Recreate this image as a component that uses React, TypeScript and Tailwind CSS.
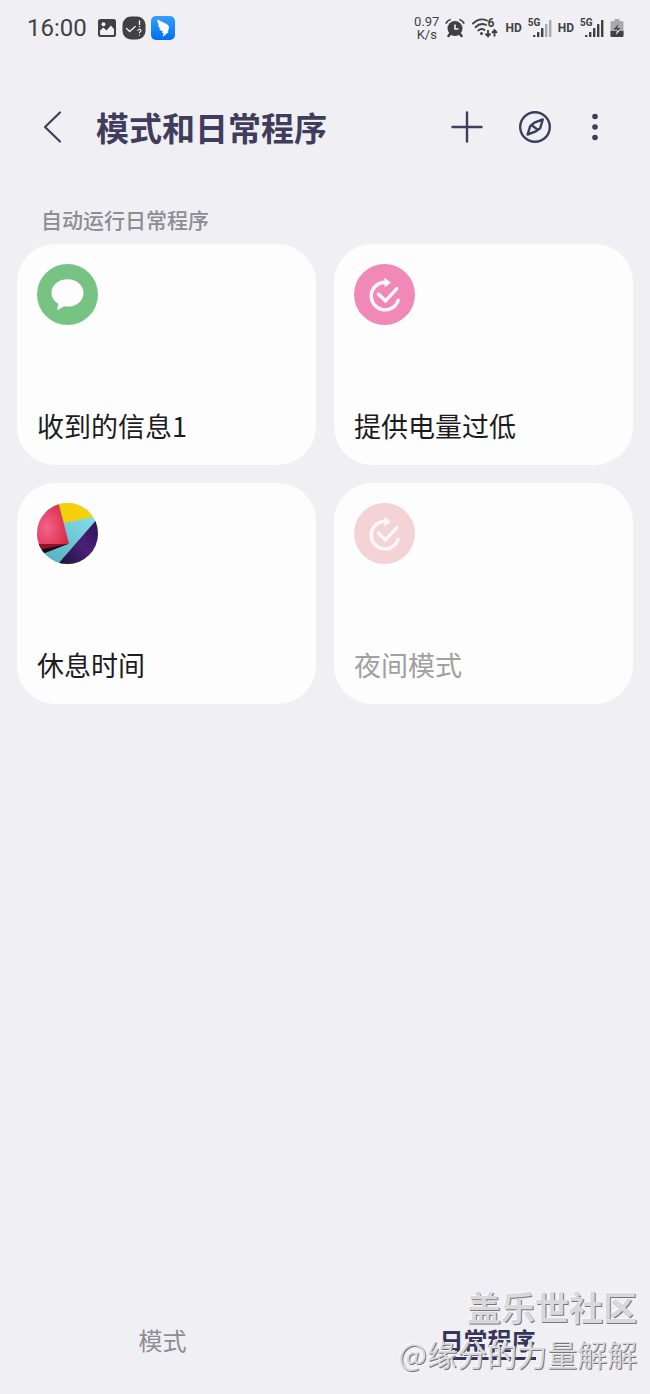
import { useState, type ReactNode } from 'react'
import clsx from 'clsx'

interface Routine {
  name: string
  icon: ReactNode
  disabled?: boolean
}

function GalleryIcon() {
  return (
    <svg viewBox="0 0 20 20" className="size-5">
      <rect x="1" y="1" width="18" height="18" rx="2.5" fill="#414143" />
      <circle cx="6.5" cy="6.3" r="2" fill="#efeff4" />
      <path d="M3 16v-3.500l3.500-3 3 3 4.300-5L17 11v5a1 1 0 0 1-1 1H4a1 1 0 0 1-1-1z" fill="#efeff4" />
    </svg>
  )
}

function ReminderIcon() {
  return (
    <svg viewBox="0 0 24 24" className="size-6">
      <rect x="0.5" y="0.5" width="23" height="23" rx="8.5" fill="#414143" />
      <g fill="none" stroke="#efeff4" strokeWidth="1.4" strokeLinecap="round" strokeLinejoin="round">
        <path d="M4.5 12.5l3.2 3 5.500-5" />
        <path d="M17.5 5v3.6M17.500 10.700v.1" />
        <path d="M15.900 14.300c.3-1.500 3.300-1.400 3.100.3-.1 1-1.500 1.100-1.500 2.200M17.500 19v.1" strokeWidth="1.200" />
      </g>
    </svg>
  )
}

function WingIcon() {
  return (
    <svg viewBox="0 0 24 24" className="size-6">
      <defs>
        <linearGradient id="wing" x1="0" y1="0" x2="0" y2="1">
          <stop offset="0" stopColor="#35a0fb" />
          <stop offset="1" stopColor="#006ef5" />
        </linearGradient>
      </defs>
      <rect width="24" height="24" rx="5" fill="url(#wing)" />
      <path d="M6.300 3.500l8.900 4.300c2.300 1.200 3.300 2.800 2.700 5l-1.400 3h1.500l-6.300 5.200.9-3.900h-1.700l.8-2.200c-1.800-.2-3.100-1.100-3.500-2.500l1.500.2C7.900 11.400 7.100 10 7.100 8.500l1.200.5C6.800 7.500 6.100 5.500 6.300 3.500z" fill="#fff" />
    </svg>
  )
}

function AlarmIcon() {
  return (
    <svg viewBox="0 0 20 20" className="size-5">
      <circle cx="10" cy="10.5" r="7.500" fill="#414143" />
      <path d="M1.200 5Q2.500 2.500 5 1.700M18.800 5Q17.500 2.500 15 1.700" fill="none" stroke="#414143" strokeWidth="1.700" strokeLinecap="round" />
      <path d="M5 16l-1.500 2M15 16l1.500 2" stroke="#414143" strokeWidth="2.600" strokeLinecap="round" />
      <path d="M10 6.500V11h3.500" fill="none" stroke="#efeff4" strokeWidth="1.600" />
    </svg>
  )
}

function WifiIcon() {
  return (
    <div className="relative h-5 w-7">
      <svg viewBox="0 0 28 20" className="h-5 w-7">
        <g fill="none" stroke="#414143" strokeWidth="1.900" strokeLinecap="round">
          <path d="M2 5.500Q8.500-.8 16 2.500" />
          <path d="M4.500 9.200Q9.500 4.300 15 7" />
          <path d="M7.300 12.500Q10.500 9.800 13.500 12" />
        </g>
        <circle cx="10.500" cy="15.500" r="1.500" fill="#414143" />
        <path d="M17 12v6M14.500 15.600l2.500 2.700 2.500-2.700M23.500 18.500v-6M21 14.900l2.500-2.700 2.500 2.700" fill="none" stroke="#414143" strokeWidth="1.900" />
      </svg>
      <span className="absolute top-0 left-4 text-xs leading-[11px] font-bold">6</span>
    </div>
  )
}

const BARS = [
  { x: 5, height: 2 },
  { x: 9, height: 5 },
  { x: 13, height: 9 },
  { x: 17, height: 13 },
  { x: 21, height: 17 },
]

function Signal({ level }: { level: number }) {
  return (
    <div className="relative h-5 w-6">
      <svg viewBox="0 0 24 20" className="h-5 w-6">
        {BARS.map((bar, i) => (
          <rect
            key={bar.x}
            x={bar.x}
            y={19 - bar.height}
            width="2.400"
            height={bar.height}
            rx="0.500"
            fill={i < level ? '#414143' : '#a9a9ae'}
          />
        ))}
      </svg>
      <span className="absolute top-0 left-0 text-[10px] leading-[9px] font-bold">5G</span>
    </div>
  )
}

function BatteryIcon() {
  return (
    <svg viewBox="0 0 14 20" className="h-5 w-[14px]">
      <path d="M4.500 1h5v2H12a1.500 1.500 0 0 1 1.500 1.500v13A1.500 1.500 0 0 1 12 19H2A1.500 1.500 0 0 1 .5 17.500v-13A1.500 1.500 0 0 1 2 3h2.500z" fill="#a9a9ae" />
      <path d="M.5 13h13v4.500A1.500 1.500 0 0 1 12 19H2a1.500 1.500 0 0 1-1.500-1.500z" fill="#414143" />
      <path d="M8.500 6L3.500 11.500h3z M7.200 9.800l3.500.2L7 13z" fill="#414143" />
      <path d="M7 13h2.500L5.800 17z" fill="#efeff4" />
    </svg>
  )
}

function MessageIcon() {
  return (
    <svg viewBox="0 0 61 61" className="size-[61px]">
      <circle cx="30.500" cy="30.500" r="30.500" fill="#76c384" />
      <path d="M30.500 15.200c9 0 16 5.800 16 13.700s-7 13.700-16 13.700c-1.200 0-2.300-.1-3.400-.3l-5.900 3.500c-.7.400-1.200 0-1-.7l1.300-5.300c-4.200-2.300-7-6.300-7-10.900 0-7.900 7-13.700 16-13.700z" fill="#fdfdfd" />
    </svg>
  )
}

function RoutineIcon({ color }: { color: string }) {
  return (
    <svg viewBox="0 0 61 61" className="size-[61px]">
      <circle cx="30.500" cy="30.500" r="30.500" fill={color} />
      <g fill="none" stroke="#fdf7f9" strokeWidth="3.400" strokeLinecap="round">
        <path d="M31 18.300A13.800 13.800 0 1 0 44.200 36.200" />
        <path d="M24.500 30.200l7 6.600 11.300-12.200" strokeLinejoin="miter" />
      </g>
      <path d="M30.500 13.800l6.500 5-6.500 4.700z" fill="#fdf7f9" />
    </svg>
  )
}

function PaperIcon() {
  return (
    <svg viewBox="0 0 61 61" className="size-[61px]">
      <defs>
        <clipPath id="disc">
          <circle cx="30.500" cy="30.500" r="30.500" />
        </clipPath>
        <radialGradient id="red" cx="0.300" cy="0.600" r="0.800">
          <stop offset="0" stopColor="#f3648b" />
          <stop offset="1" stopColor="#d6243f" />
        </radialGradient>
        <linearGradient id="cyan" x1="1" y1="0" x2="0" y2="1">
          <stop offset="0" stopColor="#8ce8f3" />
          <stop offset="1" stopColor="#52a9b8" />
        </linearGradient>
        <linearGradient id="purple" x1="1" y1="0" x2="0" y2="1">
          <stop offset="0" stopColor="#2c1055" />
          <stop offset="0.500" stopColor="#4b2276" />
          <stop offset="1" stopColor="#1d1038" />
        </linearGradient>
      </defs>
      <g clipPath="url(#disc)">
        <rect width="61" height="61" fill="url(#cyan)" />
        <path d="M20 0h41v13L27 20z" fill="#f4d10b" />
        <path d="M61 15v46H21z" fill="url(#purple)" />
        <path d="M0 41h31L8 50H0z" fill="#160c18" />
        <path d="M0 41h31L4 46.500z" fill="#8f1229" />
        <path d="M0 0h21.500L32 41H0z" fill="url(#red)" />
      </g>
    </svg>
  )
}

const routines: Routine[] = [
  { name: '收到的信息1', icon: <MessageIcon /> },
  { name: '提供电量过低', icon: <RoutineIcon color="#f089b7" /> },
  { name: '休息时间', icon: <PaperIcon /> },
  { name: '夜间模式', icon: <RoutineIcon color="#f4d3d6" />, disabled: true },
]

function StatusBar() {
  return (
    <div className="flex h-14 items-center justify-between pr-[26px] pl-[27px] font-[Roboto,sans-serif] text-[#414143]">
      <div className="flex items-center">
        <span className="mr-[10px] text-2xl">16:00</span>
        <div className="flex items-center gap-[5px]">
          <GalleryIcon />
          <ReminderIcon />
          <WingIcon />
        </div>
      </div>
      <div className="flex items-center gap-[6px]">
        <div className="text-center text-[13px] leading-[13px]">
          <div>0.97</div>
          <div>K/s</div>
        </div>
        <AlarmIcon />
        <WifiIcon />
        <span className="text-xs font-bold">HD</span>
        <Signal level={3} />
        <span className="text-xs font-bold">HD</span>
        <Signal level={5} />
        <BatteryIcon />
      </div>
    </div>
  )
}

function Header() {
  return (
    <header className="flex h-[142px] items-center pr-[46px] pl-[42px] text-[#403d5c]">
      <button aria-label="返回" className="mr-8">
        <svg viewBox="0 0 22 34" className="h-[34px] w-[22px]" fill="none" stroke="currentColor" strokeWidth="2.200" strokeLinecap="round" strokeLinejoin="round">
          <path d="M18 2.500L3 17l15 14.500" />
        </svg>
      </button>
      <h1 className="flex-1 text-[33px] leading-[40px] font-bold">模式和日常程序</h1>
      <div className="flex items-center gap-[34px]">
        <button aria-label="添加">
          <svg viewBox="0 0 34 34" className="size-[34px]" stroke="currentColor" strokeWidth="2.400" strokeLinecap="round">
            <path d="M17 2.500v29M2.500 17h29" />
          </svg>
        </button>
        <button aria-label="发现">
          <svg viewBox="0 0 34 34" className="size-[34px]" fill="none" stroke="currentColor" strokeWidth="2.400" strokeLinejoin="round">
            <circle cx="17" cy="17" r="14.800" />
            <path d="M24.800 9.500l-2.600 8.700-5 3.500-7.600 2.800 2.700-8.600 4.700-3.600z M13 14.800l7.500 5.500" />
          </svg>
        </button>
        <button aria-label="更多选项">
          <svg viewBox="0 0 18 34" className="h-[34px] w-[18px]" fill="currentColor">
            <circle cx="9" cy="6.500" r="2.800" />
            <circle cx="9" cy="17" r="2.800" />
            <circle cx="9" cy="27.500" r="2.800" />
          </svg>
        </button>
      </div>
    </header>
  )
}

function RoutineCard({ routine }: { routine: Routine }) {
  return (
    <button
      className={clsx(
        'flex h-[221px] flex-col items-start justify-between rounded-[38px] bg-[#fdfdfd] p-5 text-left text-[27px] leading-[38px]',
        routine.disabled ? 'text-[#a0a0a0]' : 'text-[#1c1c1e]'
      )}
    >
      {routine.icon}
      <span>{routine.name}</span>
    </button>
  )
}

export default function App() {
  const [tab, setTab] = useState('日常程序')

  return (
    <div className="relative flex min-h-screen flex-col bg-[#efeff4] font-['Noto_Sans_CJK_SC',sans-serif]">
      <StatusBar />
      <Header />

      <main className="flex-1 px-[17px]">
        <h2 className="pt-1 pb-2 pl-6 text-[21px] leading-[34px] font-medium text-[#8d8d92]">自动运行日常程序</h2>
        <div className="grid grid-cols-2 gap-[18px]">
          {routines.map((routine) => (
            <RoutineCard key={routine.name} routine={routine} />
          ))}
        </div>
      </main>

      <nav className="grid h-[106px] grid-cols-2 justify-items-center">
        {['模式', '日常程序'].map((name) => (
          <button
            key={name}
            onClick={() => setTab(name)}
            className={clsx(
              'mt-8 h-10 self-start border-b-[3px] text-2xl leading-[40px]',
              tab === name ? 'border-[#37345a] font-bold text-[#37345a]' : 'border-transparent text-[#8d8d92]'
            )}
          >
            {name}
          </button>
        ))}
      </nav>

      {/* community watermark */}
      <div className="pointer-events-none absolute right-[13px] bottom-[18px] text-right text-[#d9d9db] [text-shadow:1px_1px_0_#77777b,-1px_-1px_0_#fafafc]">
        <p className="text-[34px] leading-[46px] font-bold">盖乐世社区</p>
        <p className="text-[30px] leading-[46px]">@缘分的力量解解</p>
      </div>
    </div>
  )
}
